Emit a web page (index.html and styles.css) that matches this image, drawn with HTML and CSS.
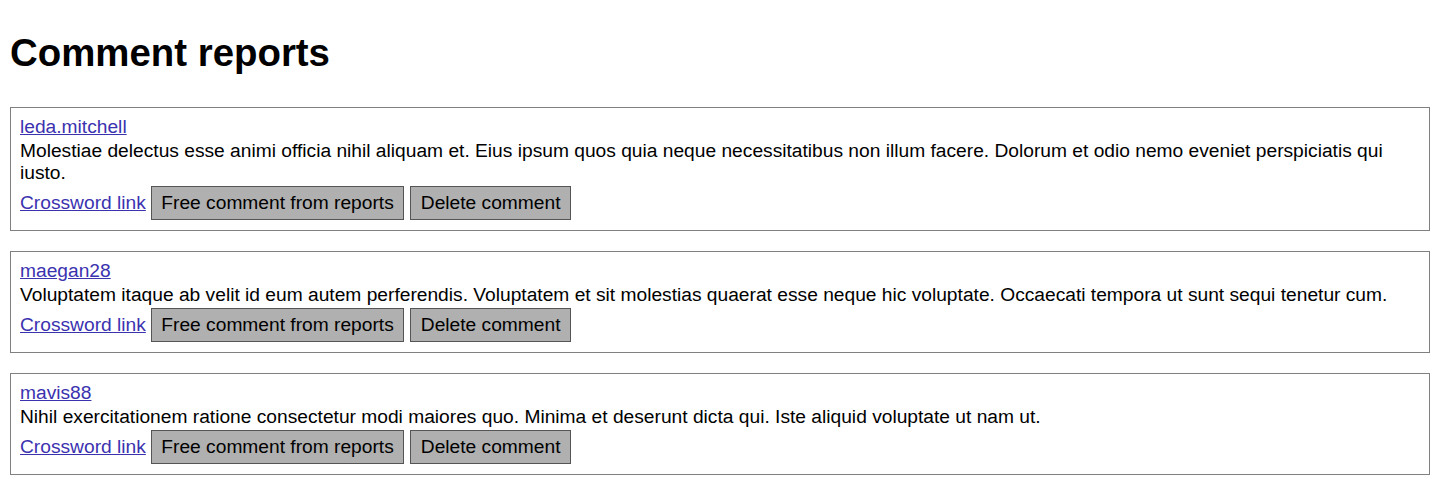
FILE: index.html
```html
<!DOCTYPE html>
<html lang="en">
<head>
<meta charset="utf-8">
<title>Comment reports</title>
<link rel="stylesheet" href="styles.css">
</head>
<body>
<main class="page">
  <h1 class="title">Comment reports</h1>
  <div class="reports">
    <section class="report">
      <a class="user" href="#">leda.mitchell</a>
      <p class="body">Molestiae delectus esse animi officia nihil aliquam et. Eius ipsum quos quia neque necessitatibus non illum facere. Dolorum et odio nemo eveniet perspiciatis qui iusto.</p>
      <div class="actions">
        <a class="xlink" href="#">Crossword link</a>
        <button class="btn" type="button">Free comment from reports</button>
        <button class="btn" type="button">Delete comment</button>
      </div>
    </section>
    <section class="report">
      <a class="user" href="#">maegan28</a>
      <p class="body">Voluptatem itaque ab velit id eum autem perferendis. Voluptatem et sit molestias quaerat esse neque hic voluptate. Occaecati tempora ut sunt sequi tenetur cum.</p>
      <div class="actions">
        <a class="xlink" href="#">Crossword link</a>
        <button class="btn" type="button">Free comment from reports</button>
        <button class="btn" type="button">Delete comment</button>
      </div>
    </section>
    <section class="report">
      <a class="user" href="#">mavis88</a>
      <p class="body">Nihil exercitationem ratione consectetur modi maiores quo. Minima et deserunt dicta qui. Iste aliquid voluptate ut nam ut.</p>
      <div class="actions">
        <a class="xlink" href="#">Crossword link</a>
        <button class="btn" type="button">Free comment from reports</button>
        <button class="btn" type="button">Delete comment</button>
      </div>
    </section>
  </div>
</main>
</body>
</html>
```

FILE: styles.css
```css
html, body {
  margin: 0;
  padding: 0;
  background: #ffffff;
}

body {
  font-family: "Liberation Sans", Arial, sans-serif;
  font-size: 19.2px;
  line-height: 22px;
  color: #000000;
}

.page {
  padding: 0 10px;
}

.title {
  font-size: 38.4px;
  font-weight: bold;
  line-height: 44px;
  margin: 31px 0 32px 0;
}

.reports {
  display: flex;
  flex-direction: column;
  gap: 20px;
}

.report {
  border: 1px solid #808080;
  padding: 8px 9px 10px 9px;
  display: flex;
  flex-direction: column;
  align-items: flex-start;
}

.user {
  color: #3b32b0;
}

.body {
  margin: 2px 0 0 0;
}

.actions {
  margin-top: 2px;
  display: flex;
  align-items: baseline;
}

.xlink {
  color: #3b32b0;
  margin-right: 5px;
}

.btn {
  font-family: "Liberation Sans", Arial, sans-serif;
  font-size: 19.2px;
  line-height: 22px;
  color: #000000;
  background: #b0b0b0;
  border: 1px solid #555555;
  border-radius: 0;
  padding: 5px 9.5px;
  margin: 0 6px 0 0;
}
```
